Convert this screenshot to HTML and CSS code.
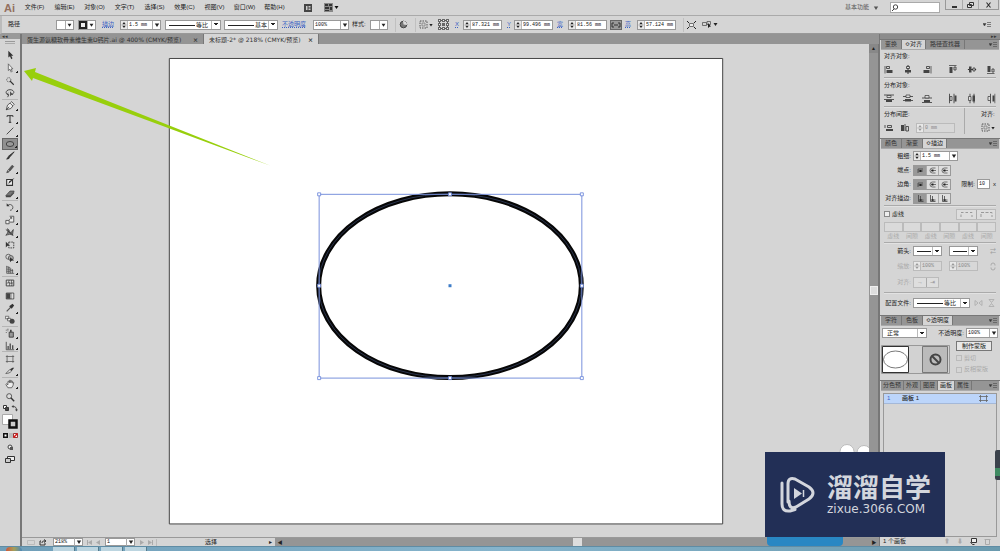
FILE: index.html
```html
<!DOCTYPE html>
<html lang="zh-CN">
<head>
<meta charset="utf-8">
<title>未标题-2</title>
<link rel="stylesheet" href="styles.css">
</head>
<body>
<svg class="defs" aria-hidden="true">
  <symbol id="spin" viewBox="0 0 7 9"><path d="M1.500 3.500 3.500 1 5.500 3.500zM1.500 5.500 3.500 8 5.500 5.500z" fill="currentColor"/><path d="M0 4.500h7" stroke="#999" stroke-width=".5"/></symbol>
  <symbol id="down" viewBox="0 0 8 8"><path d="M1.800 2.500h4.400L4 6z" fill="currentColor"/></symbol>
  <symbol id="grid" viewBox="0 0 9 9"><path d="M1 1h7v7H1z" fill="none" stroke="#555" stroke-dasharray="1.500 1"/><path d="M3 3h3v3H3z" fill="none" stroke="#777" stroke-width=".7"/></symbol>
  <symbol id="flyout" viewBox="0 0 9 6"><path d="M0 1.500h3L1.500 4zM4 .5h4M4 2.500h4M4 4.500h4" fill="#333" stroke="#555" stroke-width=".7"/></symbol>
  <symbol id="al1" viewBox="0 0 9 9"><path d="M.5 1v7.500" stroke="#333" stroke-width=".7"/><path d="M2 1.500h3v2H2z" fill="none" stroke="#333" stroke-width=".8"/><path d="M2 5h6v3H2z" fill="#444"/></symbol>
  <symbol id="al2" viewBox="0 0 9 9"><path d="M4.500 0v9" stroke="#333"/><path d="M3 1.500h3v2H3z" fill="#ddd" stroke="#333" stroke-width=".8"/><path d="M1.500 5h6v2.500h-6z" fill="#444"/></symbol>
  <symbol id="al3" viewBox="0 0 9 9"><path d="M8.500 1v7.500" stroke="#333" stroke-width=".7"/><path d="M4 1.500h3v2H4z" fill="none" stroke="#333" stroke-width=".8"/><path d="M1 5h6v3H1z" fill="#444"/></symbol>
  <symbol id="ds1" viewBox="0 0 10 9"><path d="M0 1h10M0 5.500h10" stroke="#333" stroke-width=".8"/><path d="M3 1.500h4v2H3z" fill="#ddd" stroke="#333" stroke-width=".7"/><path d="M2 6h6v2H2z" fill="#444"/></symbol>
  <symbol id="ds2" viewBox="0 0 10 9"><path d="M0 2.500h10M0 6.500h10" stroke="#333" stroke-width=".8"/><path d="M3 1h4v2.500H3z" fill="#ddd" stroke="#333" stroke-width=".7"/><path d="M2 5h6v2.500H2z" fill="#444"/></symbol>
  <symbol id="ds3" viewBox="0 0 10 9"><path d="M0 4h10M0 8.500h10" stroke="#333" stroke-width=".8"/><path d="M3 1.500h4V4H3z" fill="#ddd" stroke="#333" stroke-width=".7"/><path d="M2 6h6v2H2z" fill="#444"/></symbol>
  <symbol id="cap" viewBox="0 0 11 9"><path d="M3 7V3h5M3 5h5" fill="none" stroke="#444" stroke-width=".8"/><path d="M4.500 4h2v2h-2z" fill="#222"/></symbol>
  <symbol id="capr" viewBox="0 0 11 9"><path d="M8.500 2H5.500a2.500 2.500 0 0 0 0 5h3M4 4.500h5" fill="none" stroke="#444" stroke-width=".7"/><path d="M4.500 3.500h2v2h-2z" fill="#222"/></symbol>
  <symbol id="edge" viewBox="0 0 11 9"><path d="M3.500 1v6.500h5M5.500 2v4h3" fill="none" stroke="#444" stroke-width=".8"/><path d="M4.500 5h2v2h-2z" fill="#333"/></symbol>
</svg>
<div class="app">
  <header class="menubar">
    <span class="logo">Ai</span>
    <nav class="menus">
      <button>文件(F)</button><button>编辑(E)</button><button>对象(O)</button><button>文字(T)</button><button>选择(S)</button><button>效果(C)</button><button>视图(V)</button><button>窗口(W)</button><button>帮助(H)</button>
    </nav>
    <button class="bridge" aria-label="Bridge"><svg width="8" height="8"><path d="M0 0h8v8H0z" fill="#444"/><path d="M2 2h1.500v4H2zM4.500 2h2v1.500h-2zM4.500 4.500h2V6h-2z" fill="#ccc"/></svg></button>
    <button class="arrange" aria-label="排列文档"><svg width="15" height="9"><path d="M0 0h9v9H0z" fill="#888"/><path d="M1 1h3v2H1zM5 1h3v2H5zM1 4h4v2H1zM1 7h4v1H1zM6 4h2v3H6z" fill="#333"/><path d="M10.500 3h4L12.500 6z" fill="#111"/></svg></button>
    <span class="grow"></span>
    <button class="workspace">基本功能<svg width="8" height="8"><use href="#down"/></svg></button>
    <label class="search"><svg width="8" height="8"><circle cx="4.500" cy="3" r="2.200" fill="none" stroke="#444"/><path d="M3 5 1 7" stroke="#444"/></svg><input aria-label="搜索"></label>
    <div class="winbtns">
      <button aria-label="最小化"><svg width="9" height="8"><path d="M2 5h5v2H2z" fill="#333"/></svg></button><button aria-label="还原"><svg width="9" height="8"><path d="M3.500 1.500h4v3h-4zM1.500 3.500h4v3h-4z" fill="#ddd" stroke="#333"/></svg></button><button aria-label="关闭"><svg width="9" height="8"><path d="m2.500 1.500 4 5m0-5-4 5" stroke="#333" stroke-width="1.200"/></svg></button>
    </div>
  </header>

  <section class="control">
    <span>路径</span>
    <button class="swatch w18" aria-label="填色"><i class="fill"></i><svg width="8" height="8"><use href="#down"/></svg></button>
    <button class="swatch w18" aria-label="描边色"><i class="ring"></i><svg width="8" height="8"><use href="#down"/></svg></button>
    <a href="#stroke">描边</a>
    <div class="combo w41"><svg class="spin"><use href="#spin"/></svg><input aria-label="描边粗细" value="1.5 mm"><button aria-label="粗细列表"><svg width="8" height="8"><use href="#down"/></svg></button></div>
    <select class="sel line w56" aria-label="变量宽度"><option>等比</option></select>
    <select class="sel line w54" aria-label="画笔"><option>基本</option></select>
    <a href="#opacity">不透明度</a>
    <div class="combo w36"><input aria-label="不透明度" value="100%"><button aria-label="不透明度列表"><svg width="8" height="8"><use href="#down"/></svg></button></div>
    <span>样式:</span>
    <button class="swatch w18" aria-label="图形样式"><i class="fill"></i><svg width="8" height="8"><use href="#down"/></svg></button>
    <button class="ic sep" aria-label="重新着色"><svg width="9" height="9"><circle cx="4.500" cy="4.500" r="3.300" fill="#777" stroke="#444"/><path d="M4 1a3.500 3.500 0 0 1 4 4L4.500 4.500z" fill="#ddd"/></svg></button>
    <button class="ic sep" aria-label="对齐选项"><svg width="9" height="9"><use href="#grid"/></svg><svg width="6" height="6"><use href="#down"/></svg></button>
    <button class="ic sep" aria-label="参考点"><svg width="11" height="11"><path d="M1.500 1.500h8v8h-8z" fill="none" stroke="#555"/><path d="M0 0h3v3H0zM4 0h3v3H4zM8 0h3v3H8zM0 4h3v3H0zM4 4h3v3H4zM8 4h3v3H8zM0 8h3v3H0zM4 8h3v3H4zM8 8h3v3H8z" fill="#666"/><path d="M1 1h1v1H1zM5 1h1v1H5zM9 1h1v1H9zM1 5h1v1H1zM9 5h1v1H9zM1 9h1v1H1zM5 9h1v1H5zM9 9h1v1H9z" fill="#eee"/></svg></button>
    <a href="#x">X</a>
    <div class="combo w39"><svg class="spin"><use href="#spin"/></svg><input id="x" aria-label="X" value="87.321 mm"></div>
    <a href="#y">Y</a>
    <div class="combo w39"><svg class="spin"><use href="#spin"/></svg><input id="y" aria-label="Y" value="99.496 mm"></div>
    <a href="#w">宽</a>
    <div class="combo w39"><svg class="spin"><use href="#spin"/></svg><input id="w" aria-label="宽" value="81.56 mm"></div>
    <button class="link" aria-label="约束比例"><svg width="10" height="6"><path d="M3 1H1v4h2M7 1h2v4H7M3 3h4" fill="none" stroke="#333"/></svg></button>
    <a href="#h">高</a>
    <div class="combo w39"><svg class="spin"><use href="#spin"/></svg><input id="h" aria-label="高" value="57.124 mm"></div>
    <button class="ic sep" aria-label="隔离"><svg width="9" height="8"><path d="M2.500 2.500h4v3h-4z" fill="#eee" stroke="#555" stroke-width=".8"/><path d="M0 0l2 2M9 0 7 2M0 8l2-2M9 8 7 6" stroke="#222"/></svg></button>
    <button class="ic" aria-label="选择类似"><svg width="16" height="9"><path d="M.5 2.500h4v3h-4zM5 1.500h3.500v3H5z" fill="none" stroke="#555" stroke-width=".8"/><path d="m6 3 3 3.500-1.500.2L6 8z" fill="#222"/><path d="M11.500 3h4L13.500 6z" fill="#222"/></svg></button>
    <button class="ic end" aria-label="面板菜单"><svg width="9" height="6"><use href="#flyout"/></svg></button>
  </section>

  <main class="work">
    <aside class="tools">
      <div class="grip">◂◂</div>
      <div class="handle"></div>
      <div class="toolgrid">
        <button aria-label="选择"><svg viewBox="0 0 12 12"><path d="M4 1v8l2-1.500L7.500 11 9 10 7.500 7H10z" fill="#333"/></svg></button>
        <button class="more" aria-label="直接选择"><svg viewBox="0 0 12 12"><path d="M4 1v8l2-1.500L7.500 11 8.500 10 7.500 7H9.500z" fill="#eee" stroke="#444" stroke-width=".8"/></svg></button>
        <button aria-label="魔棒"><svg viewBox="0 0 12 12"><circle cx="4.500" cy="4.500" r="2.500" fill="none" stroke="#555" stroke-dasharray="1.500 .7"/><path d="m6 6 4.500 4.500" stroke="#333" stroke-width="1.300"/></svg></button>
        <button class="rule" aria-label="套索"><svg viewBox="0 0 12 12"><path d="M4 8C-.5 7 1 2 6 2s6.500 5 1.500 5.500M4 6c-2 1-1 3 0 2s0 2-1 3" fill="none" stroke="#333"/><path d="m6 4 0 6 1.500-1.500H10z" fill="#555"/></svg></button>
        <button class="more" aria-label="钢笔"><svg viewBox="0 0 12 12"><path d="M1.500 10.500 3 5l3-2.500L9.500 6 7 9zM1.500 10.500 5 7M6.500 2 8 .8 11 4 9.700 5.500" fill="#eee" stroke="#333" stroke-width=".9"/></svg></button>
        <button class="more" aria-label="文字"><svg viewBox="0 0 12 12"><path d="M2.500 3.500V2h7v1.500M6 2v8M4.500 10h3" fill="none" stroke="#333" stroke-width="1.200"/></svg></button>
        <button class="more" aria-label="直线段"><svg viewBox="0 0 12 12"><path d="m2 10 8-8" stroke="#333"/></svg></button>
        <button class="more on" aria-label="椭圆"><svg viewBox="0 0 12 12"><ellipse cx="6" cy="6" rx="4.500" ry="3" fill="#999" stroke="#333"/></svg></button>
        <button aria-label="画笔"><svg viewBox="0 0 12 12"><path d="m11 1-5 6-1.500-1z" fill="#333" stroke="#333"/><path d="M4.500 6 6 7.500C5 10 3 10.500 1 10c2-1 1.500-3 3.500-4" fill="#333"/></svg></button>
        <button class="more" aria-label="铅笔"><svg viewBox="0 0 12 12"><path d="M2 10.500 3 8l5.500-6.500L10.500 3 5 9.500z" fill="#555" stroke="#333" stroke-width=".6"/><path d="m3.500 7.500 2 1.500" stroke="#ddd"/></svg></button>
        <button aria-label="斑点画笔"><svg viewBox="0 0 12 12"><path d="M2 3h7v7H2z" fill="#eee" stroke="#333" stroke-width="1.300"/><path d="m11.500 1-4.500 5-3 2.500 1-3.500z" fill="#333"/></svg></button>
        <button class="more rule" aria-label="橡皮擦"><svg viewBox="0 0 12 12"><path d="m1 8 5-5.500h5L6.500 8z" fill="#777" stroke="#444"/><path d="M1 8h5.500l4.500-5V5L6.500 10H1z" fill="#444"/></svg></button>
        <button class="more" aria-label="旋转"><svg viewBox="0 0 12 12"><path d="M3.500 4A3.500 3.500 0 1 1 6 10" fill="none" stroke="#444"/><path d="M2 1.500V5h3.500z" fill="#333"/></svg></button>
        <button class="more" aria-label="比例缩放"><svg viewBox="0 0 12 12"><path d="M1 6.500h4v4H1zM5.500 1.500h5v7H6" fill="#eee" stroke="#444"/><path d="m5 6 3-3M6 3h2v2" fill="none" stroke="#333" stroke-width=".8"/></svg></button>
        <button class="more" aria-label="宽度"><svg viewBox="0 0 12 12"><path d="M1 10c3-4 3-4 2-8 3 2 2 4 4 5l3-4-1 7C7 8 4 9 1 10" fill="#777" stroke="#333" stroke-width=".8"/><path d="M1 3l9 7" stroke="#333"/></svg></button>
        <button aria-label="自由变换"><svg viewBox="0 0 12 12"><path d="M4.500 2.500h6v7h-6z" fill="none" stroke="#333" stroke-dasharray="2 1"/><path d="M1 2v7l2-2h3z" fill="#333"/></svg></button>
        <button class="more" aria-label="形状生成器"><svg viewBox="0 0 12 12"><circle cx="4" cy="4.500" r="3" fill="none" stroke="#555"/><circle cx="7" cy="6" r="3" fill="#aaa" stroke="#555"/><path d="m6 5 0 6 2-2h3z" fill="#333"/></svg></button>
        <button class="more rule" aria-label="透视网格"><svg viewBox="0 0 12 12"><path d="M2 1v9h9M2 2l4 1v7M4 2v8M2 5h4M2 7.500h4M7 4v6M9 5v5M6 6l4 1" fill="none" stroke="#444" stroke-width=".8"/></svg></button>
        <button aria-label="网格"><svg viewBox="0 0 12 12"><path d="M1.500 2.500h9v7h-9z" fill="#ddd" stroke="#333"/><path d="M2 7c3-4 5 2 8-2M5 2.500c-2 3 2 4 0 7M8 2.500c-1 3 1 4 0 7" fill="none" stroke="#444"/></svg></button>
        <button aria-label="渐变"><svg viewBox="0 0 12 12"><path d="M1.500 2.500h9v7h-9z" fill="#999" stroke="#333"/><path d="M2 3h4v6H2z" fill="#444"/><path d="M8 3h2v6H8z" fill="#ddd"/></svg></button>
        <button class="more" aria-label="吸管"><svg viewBox="0 0 12 12"><path d="m2 10 5-5" stroke="#555" stroke-width="1.500"/><path d="m5 4 3 3 3-4-2-2z" fill="#333"/></svg></button>
        <button class="rule" aria-label="混合"><svg viewBox="0 0 12 12"><path d="M.5 1.500h4v3h-4zM3 4h4v3H3z" fill="#eee" stroke="#444" stroke-width=".8"/><circle cx="8.500" cy="7.500" r="3" fill="#444"/></svg></button>
        <button class="more" aria-label="符号喷枪"><svg viewBox="0 0 12 12"><path d="M5 5h5v6H5z" fill="#999" stroke="#333"/><path d="M6 2h2v3H6z" fill="#444"/><path d="M1 2h1v1H1zM3 3h1v1H3zM1 5h1v1H1zM3 1h1v1H3z" fill="#333"/></svg></button>
        <button class="more rule" aria-label="柱形图"><svg viewBox="0 0 12 12"><path d="M1.500 1v9.500H11" fill="none" stroke="#444"/><path d="M3 6h1.500v4H3zM5.500 3H7v7H5.500zM8.500 5H10v5H8.500z" fill="#444"/></svg></button>
        <button aria-label="画板"><svg viewBox="0 0 12 12"><path d="M1 3h10M1 9h10M2.500 1.500v9M9.500 1.500v9" stroke="#555" stroke-width=".9"/></svg></button>
        <button class="more rule" aria-label="切片"><svg viewBox="0 0 12 12"><path d="m1 9 5-5 2 2c-2 2-4 3-7 3" fill="#ddd" stroke="#555"/><path d="m6 4 3-2h2L8 6z" fill="#333"/></svg></button>
        <button class="more" aria-label="抓手"><svg viewBox="0 0 12 12"><path d="M3.500 10.500 1 6.500l1-.8 1.500 1.300V3l1-.5.7 2L5.500 1.500h1l.5 3 .8-2.500 1 .5L8.500 5l1.200-1 .8.500-1 3.500-1.500 2.500z" fill="#eee" stroke="#333" stroke-width=".8"/></svg></button>
        <button aria-label="缩放"><svg viewBox="0 0 12 12"><circle cx="5" cy="5" r="3" fill="#ddd" stroke="#444"/><path d="m7 7 4 4" stroke="#333" stroke-width="1.700"/></svg></button>
      </div>
      <svg class="colors" viewBox="0 0 20 62"><path d="M3.500 2.500h3v3h-3z" fill="#fff" stroke="#333"/><path d="M5.500 4.500h3v3h-3z" fill="#444" stroke="#333"/><path d="M13 3.500c3 0 3.500 1.500 3.500 4" fill="none" stroke="#444"/><path d="m11.500 3.500 2-1.500v3zM15 6.500h3L16.500 8.500z" fill="#444"/><path d="M2.500 11.500h10v10h-10z" fill="#fff" stroke="#aaa"/><path d="M9.500 17.500h7v7h-7z" fill="#ccc" stroke="#111" stroke-width="2.500"/><path d="M3 30h5v5H3z" fill="#111"/><path d="M4.500 31.500h2v2h-2z" fill="#fff"/><path d="M9 30h4v5H9z" fill="#bbb"/><path d="M13.500 30.500h4v4h-4z" fill="#fff" stroke="#933"/><path d="m13.500 34.500 4-4" stroke="#d11" stroke-width="1.500"/><circle cx="10" cy="44" r="2" fill="#eee" stroke="#444"/><path d="M10 44h3v3h-3z" fill="#555"/><path d="M7.500 53.500h7v4h-7z" fill="#eee" stroke="#333"/><path d="M5.500 55.500h5v4h-5z" fill="#ccc" stroke="#333"/></svg>
    </aside>

    <section class="doc">
      <div class="doctabs">
        <button>蛋生源氨糖软骨素维生素D钙片.ai @ 400% (CMYK/预览)<b>×</b></button><button class="active">未标题-2* @ 218% (CMYK/预览)<b>×</b></button>
      </div>
      <div class="viewport">
        <svg class="stage" viewBox="0 0 848 494" preserveAspectRatio="xMinYMin slice">
          <path d="M147.500 14.500h554v466h-554z" fill="#fff" stroke="#444"/>
          <ellipse cx="428.500" cy="242" rx="131.500" ry="92" fill="none" stroke="#060606" stroke-width="5"/>
          <ellipse cx="428.500" cy="242" rx="131.500" ry="92" fill="none" stroke="#33405f" stroke-width=".8"/>
          <path d="M297.500 150.500h263v184h-263z" fill="none" stroke="#7891dc" stroke-width="1"/>
          <g fill="#fff" stroke="#6482d8" stroke-width=".8"><path d="M296 149h3v3h-3zM427 149h3v3h-3zM559 149h3v3h-3zM296 240.500h3v3h-3zM559 240.500h3v3h-3zM296 333h3v3h-3zM427 333h3v3h-3zM559 333h3v3h-3z"/></g>
          <path d="M427 240.500h3v3h-3z" fill="#3e7dc8"/>
          <path d="M2 27 14 24 13 28 249 122 11 34 10 37z" fill="#98cf0c"/>
          <g fill="#fff" stroke="#bbb"><circle cx="826" cy="408" r="7"/><circle cx="843" cy="409" r="7"/></g>
        </svg>
        <div class="vscroll"><button aria-label="向上">▲</button><i></i></div>
      </div>
      <footer class="status">
        <svg class="sync" width="26" height="7"><path d="M5.500 1.500h7v4h-7z" fill="none" stroke="#bbb"/><path d="M19 2h-1v4h5V4M20 4c0-2 1-2 3-2M22 .5 24 2l-2 1.500" fill="none" stroke="#333"/></svg>
        <div class="combo w30"><input aria-label="缩放比例" value="218%"><button aria-label="缩放列表"><svg width="8" height="8"><use href="#down"/></svg></button></div>
        <span class="nav"><svg width="16" height="7"><path d="M1 1h1v5H1zM6 1v5L2 3.500zM14 1v5l-4-2.500z" fill="#aaa"/></svg></span>
        <div class="combo w30"><input aria-label="画板编号" value="1"><button aria-label="画板列表"><svg width="8" height="8"><use href="#down"/></svg></button></div>
        <span class="nav last"><svg width="16" height="7"><path d="M2 1v5l4-2.500zM10 1v5l4-2.500zM14 1h1v5h-1z" fill="#aaa"/></svg></span>
        <span class="current">选择</span>
        <button class="play" aria-label="状态菜单">▸</button>
        <div class="hscroll"><button aria-label="向左">◀</button><i></i><button aria-label="向右">▶</button></div>
      </footer>
    </section>

    <aside class="panels">
      <div class="collapse">▸▸</div>
      <section class="panel">
        <div class="tabs"><button>变换</button><button class="active">≎对齐</button><button>路径查找器</button><svg width="9" height="6"><use href="#flyout"/></svg></div>
        <div class="body align">
          <h3>对齐对象:</h3>
          <div class="six"><svg><use href="#al1"/></svg><svg><use href="#al2"/></svg><svg><use href="#al3"/></svg><svg class="turn"><use href="#al1"/></svg><svg class="turn"><use href="#al2"/></svg><svg class="turn"><use href="#al3"/></svg></div>
          <hr>
          <h3>分布对象:</h3>
          <div class="six"><svg><use href="#ds1"/></svg><svg><use href="#ds2"/></svg><svg><use href="#ds3"/></svg><svg class="left"><use href="#ds1"/></svg><svg class="left"><use href="#ds2"/></svg><svg class="left"><use href="#ds3"/></svg></div>
          <hr>
          <div class="spacing">
            <div><h3>分布间距:</h3><div class="line-row"><svg width="10" height="9"><path d="M1 2v3M3.500 2.500h4v2h-4z" fill="none" stroke="#333" stroke-width=".8"/><path d="M2 6h7v2H2z" fill="#444"/></svg><svg width="10" height="9"><path d="M1 2h3v6H1z" fill="#444"/><path d="M6 3.500h2.500V8H6zM5 1v7" fill="none" stroke="#333" stroke-width=".8"/></svg><div class="combo off w39"><svg class="spin"><use href="#spin"/></svg><input aria-label="间距" value="0 mm" disabled></div></div></div>
            <div class="to"><h3>对齐:</h3><div class="line-row"><svg width="9" height="9"><use href="#grid"/></svg><svg width="6" height="6"><use href="#down"/></svg></div></div>
          </div>
        </div>
      </section>

      <section class="panel" id="stroke">
        <div class="tabs"><button>颜色</button><button>渐变</button><button class="active">≎描边</button><svg width="9" height="6"><use href="#flyout"/></svg></div>
        <div class="body">
          <div class="row"><label for="wt">粗细:</label><div class="combo w45"><svg class="spin"><use href="#spin"/></svg><input id="wt" value="1.5 mm"><button aria-label="粗细列表"><svg width="8" height="8"><use href="#down"/></svg></button></div></div>
          <div class="row"><span class="lab">端点:</span><div class="seg"><button class="on" aria-label="平头"><svg><use href="#cap"/></svg></button><button aria-label="圆头"><svg><use href="#capr"/></svg></button><button aria-label="方头"><svg><use href="#capr"/></svg></button></div></div>
          <div class="row"><span class="lab">边角:</span><div class="seg"><button class="on" aria-label="斜接"><svg><use href="#cap"/></svg></button><button aria-label="圆角"><svg><use href="#capr"/></svg></button><button aria-label="斜角"><svg><use href="#capr"/></svg></button></div><label class="limit" for="lim">限制:</label><div class="combo w20"><input id="lim" value="10"></div><span class="times">x</span></div>
          <div class="row"><span class="lab">对齐描边:</span><div class="seg"><button class="on" aria-label="居中"><svg><use href="#edge"/></svg></button><button aria-label="内侧"><svg><use href="#edge"/></svg></button><button aria-label="外侧"><svg><use href="#edge"/></svg></button></div></div>
          <hr class="tight">
          <div class="row"><label class="check"><input type="checkbox">虚线</label><span class="grow"></span><div class="seg dim wide"><button disabled aria-label="保留"><svg viewBox="0 0 18 9"><path d="M3.500 7V2.500h11V7" fill="none" stroke="#999" stroke-dasharray="2.500 2"/></svg></button><button disabled aria-label="对齐虚线"><svg viewBox="0 0 18 9"><path d="M3.500 7V2.500h11V7" fill="none" stroke="#999" stroke-dasharray="3 1.500"/></svg></button></div></div>
          <div class="dashes"><label><input disabled>虚线</label><label><input disabled>间隙</label><label><input disabled>虚线</label><label><input disabled>间隙</label><label><input disabled>虚线</label><label><input disabled>间隙</label></div>
          <hr>
          <div class="row arrows"><span class="lab">箭头:</span><select class="sel short" aria-label="起点箭头"><option></option></select><select class="sel short" aria-label="终点箭头"><option></option></select><span class="tail">⇄</span></div>
          <div class="row arrows dimrow"><span class="lab">缩放:</span><div class="combo off w29"><svg class="spin"><use href="#spin"/></svg><input aria-label="起点缩放" value="100%" disabled></div><div class="combo off w29"><svg class="spin"><use href="#spin"/></svg><input aria-label="终点缩放" value="100%" disabled></div><span class="tail"><svg width="6" height="9"><path d="M1 3.500V3a2 2 0 0 1 4 0v.5M1 5.500V6a2 2 0 0 0 4 0v-.5" fill="none" stroke="#aaa"/></svg></span></div>
          <div class="row dimrow"><span class="lab">对齐:</span><div class="seg dim"><button disabled>→</button><button disabled>⇥</button></div></div>
          <hr>
          <div class="row profile"><label for="prof">配置文件:</label><select id="prof" class="sel line w57"><option>等比</option></select><span class="tail"><svg width="22" height="8"><path d="M1 1.500v5L4 4zM8 1.500v5L5 4zM15 .5h5L17.500 3.500zM15 7.500h5L17.500 4.500z" fill="none" stroke="#aaa" stroke-width=".8"/></svg></span></div>
        </div>
      </section>

      <section class="panel" id="opacity">
        <div class="tabs"><button>字符</button><button>色板</button><button class="active">≎透明度</button><svg width="9" height="6"><use href="#flyout"/></svg></div>
        <div class="body">
          <div class="row mode"><select class="sel blend" aria-label="混合模式"><option>正常</option></select><span class="grow"></span><label for="op">不透明度:</label><div class="combo w32"><input id="op" value="100%"><button aria-label="不透明度列表"><svg width="8" height="8"><use href="#down"/></svg></button></div></div>
          <div class="maskrow">
            <svg class="thumbs" width="70" height="29"><path d="M.5.5h68v28H.5z" fill="#d2d2d2" stroke="#999"/><path d="M1.500 1.500h26v26h-26z" fill="#fff" stroke="#333"/><ellipse cx="14.500" cy="14.500" rx="12" ry="8.500" fill="none" stroke="#555" stroke-width=".8"/><path d="M41.500 1.500h25v26h-25z" fill="#bbb" stroke="#777"/><circle cx="54.500" cy="14.500" r="5" fill="none" stroke="#444" stroke-width="2"/><path d="m51 11 7 7" stroke="#444" stroke-width="2"/></svg>
            <div class="maskopts"><button>制作蒙版</button><label class="check"><input type="checkbox" disabled>剪切</label><label class="check"><input type="checkbox" disabled>反相蒙版</label></div>
          </div>
        </div>
      </section>

      <section class="panel last">
        <div class="tabs"><button>分色预</button><button>外观</button><button>图层</button><button class="active">画板</button><button>属性</button><svg width="9" height="6"><use href="#flyout"/></svg></div>
        <div class="list"><div class="item"><span>1</span><b>画板 1</b><svg width="9" height="7"><path d="M0 1.500h9M0 5.500h9M1.500 0v7M7.500 0v7" stroke="#666" stroke-width=".8"/></svg></div></div>
        <div class="foot"><span>1 个画板</span><i>⬆</i><i>⬇</i><svg width="7" height="7"><path d="M1.500.5h5v4h-5zM.5 4l2 2.500h2" fill="#eee" stroke="#333"/></svg><svg width="7" height="7"><path d="M1.500 2v4.500h4V2M.5 1.500h6" fill="none" stroke="#aaa"/></svg></div>
      </section>
    </aside>
  </main>
  <div class="taskbar"><i class="start"></i><i class="task"></i><i class="task"></i><i class="task"></i><i class="task"></i></div>

  <div class="blob"></div>
  <div class="sidebadge"></div>
  <div class="watermark">
    <svg width="36" height="38"><g fill="none" stroke="#d3d6dd" stroke-width="3" stroke-linecap="round" stroke-linejoin="round"><path d="M2 7v21q0 8 8 7l5-1.500"/><path d="M8 26V8Q8 1 15 3L29 11Q37 17 29 23L16 31Q9 34 9 25"/></g><path d="m14 12 8 5.500-8 5.500z" fill="#d3d6dd"/><path d="M23.500 14v7" stroke="#d3d6dd" stroke-width="1.500"/></svg>
    <div class="brand"><strong>溜溜自学</strong><span>zixue.3066.COM</span></div>
  </div>
</div>
</body>
</html>
```
FILE: styles.css
```css
* { box-sizing: border-box; }
html, body { height: 100%; }
body {
  margin: 0;
  overflow: hidden;
  background: #d5d5d5;
  color: #222;
  font: 6px/9px "Liberation Sans", "Noto Sans CJK SC", sans-serif;
}
button, input, select { margin: 0; padding: 0; border: 0; border-radius: 0; background: none; color: inherit; font: inherit; }
button { display: flex; align-items: center; justify-content: center; white-space: nowrap; }
svg { display: block; flex: none; }
a { color: #3c63c4; text-decoration: underline dotted 1px; white-space: nowrap; }
h3 { margin: 0; font: inherit; }
hr { width: 100%; height: 2px; margin: 2px 0 0; border: 0; border-top: 1px solid #aaa; border-bottom: 1px solid #e2e2e2; }
hr.tight { margin: 0; }
.defs { position: absolute; width: 0; height: 0; }
.grow { flex: 1; }

.app { position: relative; display: flex; flex-direction: column; height: 100vh; }

/* Menu bar */
.menubar { display: flex; align-items: center; height: 16px; padding-left: 4px; border-bottom: 1px solid #aaa; background: #d5d5d5; }
.logo { width: 20px; color: #93705f; font: bold 11px/14px "Liberation Sans", sans-serif; }
.menus { display: flex; gap: 9px; width: 280px; }
.menus button { width: 21px; }
.bridge { width: 8px; }
.arrange { margin-left: 12px; }
.workspace { gap: 3px; margin-right: 10px; color: #555; }
.search { display: flex; align-items: center; width: 50px; height: 11px; border: 1px solid #aaa; background: #fff; }
.search input { width: 100%; min-width: 0; }
.winbtns { display: flex; align-self: flex-start; margin: 0 1px 0 5px; border: 1px solid #999; border-top: 0; }
.winbtns button { width: 16px; height: 9px; }
.winbtns button + button { border-left: 1px solid #aaa; }
.winbtns button:last-child { width: 20px; }

/* Control bar */
.control {
  display: grid;
  grid-template-columns: 48px 22px 24px 18px 45px 59px 58px 31px 39px 18px 25px 20px 23px 17px 8px 44px 7px 43px 11px 42px 15px 12px 46px 19px 20px 1fr;
  align-items: center;
  height: 18px;
  padding-left: 6px;
  border-left: 2px solid #bbb;
  border-bottom: 1px solid #999;
}
.control > * { min-width: 0; white-space: nowrap; }
.swatch { height: 10px; border: 1px solid #999; background: #fff; justify-content: flex-end; }
.swatch svg { border-left: 1px solid #aaa; }
.swatch i { flex: 1; height: 8px; }
.ring { border: 2px solid #222; background: #eee; }
.combo { display: flex; align-items: center; height: 10px; border: 1px solid #999; background: #fff; }
.combo input { flex: 1; width: 0; min-width: 0; height: 8px; padding-left: 1px; font: 5px/8px "Liberation Mono", monospace; color: #111; }
.combo button { width: 8px; height: 8px; border-left: 1px solid #aaa; }
.spin { width: 7px; height: 8px; border-right: 1px solid #bbb; background: #e8e8e8; }
.off { border-color: #bbb; background: #d8d8d8; color: #999; }
.off input { color: #888; }
.w18 { width: 18px; } .w20 { width: 20px; } .w29 { width: 29px; } .w30 { width: 30px; }
.w32 { width: 32px; } .w36 { width: 36px; } .w39 { width: 39px; } .w41 { width: 41px; }
.w45 { width: 45px; } .w54 { width: 54px; } .w56 { width: 56px; } .w57 { width: 57px; }
.sel {
  height: 10px;
  appearance: none;
  border: 1px solid #999;
  background-color: #fff;
  background-image: linear-gradient(#bbb, #bbb), conic-gradient(from -35deg at 50% 100%, #222 70deg, transparent 0);
  background-size: 1px 100%, 4px 3px;
  background-position: right 8px top 0, right 2px center;
  background-repeat: no-repeat;
  line-height: 8px;
}
.line {
  padding-left: 30px;
  background-image: linear-gradient(#bbb, #bbb), conic-gradient(from -35deg at 50% 100%, #222 70deg, transparent 0), linear-gradient(#222, #222);
  background-size: 1px 100%, 4px 3px, 26px 1px;
  background-position: right 8px top 0, right 2px center, 3px center;
}
.short {
  width: 29px;
  background-image: linear-gradient(#bbb, #bbb), conic-gradient(from -35deg at 50% 100%, #222 70deg, transparent 0), linear-gradient(#222, #222);
  background-size: 1px 100%, 4px 3px, 14px 1px;
  background-position: right 8px top 0, right 2px center, 3px center;
}
.sel { background-position: right 8px top 0, right 2px center, 3px 4px; }
.sel { background-image: linear-gradient(#bbb, #bbb), linear-gradient(to bottom right, #222 50%, transparent 0); }
.sel, .line, .short { background-image: linear-gradient(#bbb, #bbb), conic-gradient(from -35deg at 50% 100%, #222 70deg, transparent 0), linear-gradient(#222, #222); }
.blend { background-size: 1px 100%, 4px 3px, 0 0; }
.ic { height: 14px; justify-content: flex-start; }
.ic.sep { border-left: 1px solid #c0c0c0; padding-left: 3px; }
.ic.sep:nth-child(14) { border-left: 0; padding-left: 0; }
.ic.end { justify-content: flex-end; padding-right: 8px; }
.link { width: 12px; height: 10px; border: 1px solid #666; background: #999; }

/* Work area */
.work { display: flex; flex: 1; min-height: 0; }
.tools { flex: none; width: 22px; border-right: 2px solid #777; background: #d5d5d5; }
.grip { height: 5px; padding-left: 2px; background: #999; color: #333; font-size: 5px; line-height: 5px; }
.handle { height: 3px; margin: 2px 5px 5px; border-top: 1px solid #999; border-bottom: 1px solid #aaa; }
.toolgrid { display: grid; grid-auto-rows: 1fr; height: 354px; padding: 0 2px; }
.toolgrid button { position: relative; padding: 0 2px; }
.toolgrid button svg { width: 10px; height: 10px; }
.toolgrid .on { border: 1px solid #666; background: #909090; }
.rule { border-bottom: 1px solid #b5b5b5; }
.more::after { content: ""; position: absolute; right: 0; bottom: 1px; width: 2px; height: 2px; background: linear-gradient(135deg, transparent 40%, #222 0); }
.colors { width: 20px; height: 62px; }

.doc { display: flex; flex: 1; flex-direction: column; min-width: 0; }
.doctabs { display: flex; height: 10px; background: #949494; }
.doctabs button { justify-content: space-between; width: 182px; padding: 0 5px; border-right: 1px solid #777; color: #333; font-family: "DejaVu Sans", "Noto Sans CJK SC", sans-serif; }
.doctabs .active { width: 115px; background: #d5d5d5; }
.viewport { display: flex; flex: 1; min-height: 0; }
.stage { flex: 1; min-width: 0; height: 100%; }
.vscroll { display: flex; flex-direction: column; align-items: center; width: 10px; border-right: 1px solid #777; background: #959595; }
.vscroll button { width: 100%; height: 9px; background: #888; font-size: 5px; }
.vscroll i { width: 8px; height: 9px; margin-top: 233px; background: #ddd; border: 1px solid #eee; }
.status { display: flex; align-items: center; height: 9px; border-top: 1px solid #999; background: #d5d5d5; }
.status .combo { height: 8px; }
.sync { margin-right: 5px; }
.nav { display: flex; justify-content: center; width: 22px; }
.last { border-right: 1px solid #bbb; }
.current { width: 108px; text-align: center; }
.play { width: 10px; }
.hscroll { display: flex; flex: 1; align-items: center; justify-content: space-between; background: #959595; height: 8px; }
.hscroll button { width: 10px; height: 8px; font-size: 5px; }
.hscroll i { width: 9px; height: 8px; background: #ddd; }

/* Panels */
.panels { display: flex; flex: none; flex-direction: column; width: 121px; border-left: 1px solid #777; background: #d5d5d5; }
.collapse { height: 6px; padding-right: 3px; background: #8c8c8c; border-bottom: 1px solid #777; color: #333; font-size: 5px; line-height: 5px; text-align: right; }
.tabs { display: flex; align-items: center; height: 10px; background: #959595; border-bottom: 1px solid #aaa; }
.tabs button { height: 9px; padding: 0 4px; border-right: 1px solid #777; color: #333; }
.tabs .active { padding: 0 3px; background: #d5d5d5; color: #222; }
.tabs > svg { margin-left: auto; margin-right: 1px; }
.panel { border-bottom: 1px solid #777; padding: 0 1px; }
.body { padding: 0 3px 3px; }
.body h3 { height: 13px; line-height: 13px; }
.six { display: grid; grid-template-columns: 19px 19px 26px 19px 19px 10px; align-items: center; height: 13px; }
.six svg { width: 10px; height: 9px; }
.turn { transform: rotate(90deg); }
.left { transform: rotate(-90deg); }
.align { padding-bottom: 4px; }
.align hr { margin-top: 1px; }
.spacing { display: flex; justify-content: space-between; }
.line-row { display: flex; align-items: center; gap: 6px; height: 13px; }
.to { padding-left: 16px; border-left: 1px solid #aaa; }
.to .line-row { gap: 0; }
.row { display: flex; align-items: center; height: 14px; }
.row > label, .lab { flex: none; width: 27px; margin-right: 2px; text-align: right; white-space: nowrap; }
.row > .limit { width: 24px; }
.times { margin-left: 3px; }
.seg { display: flex; border: 1px solid #999; }
.seg button { width: 12px; height: 9px; background: #dedede; }
.seg button svg { width: 11px; height: 9px; }
.seg button + button { border-left: 1px solid #aaa; }
.seg .on { background: #999; }
.seg.dim { border-color: #bbb; color: #999; }
.seg.wide button, .seg.wide svg { width: 19px; }
.row > .check { width: auto; }
.check { display: flex; align-items: center; gap: 2px; white-space: nowrap; }
.check input { appearance: none; flex: none; width: 6px; height: 6px; border: 1px solid #888; background: #eee; }
.check input:disabled { border-color: #bbb; background: #d5d5d5; }
.dashes { display: grid; grid-template-columns: repeat(6, 1fr); padding-top: 1px; }
.dashes label { color: #aaa; text-align: center; line-height: 8px; }
.dashes input { display: block; width: 100%; height: 10px; border: 1px solid #bbb; background: #dadada; }
.arrows > .sel + .sel, .arrows > .combo + .combo { margin-left: 7px; }
.tail { margin-left: auto; color: #999; }
.dimrow { color: #aaa; height: 16px; }
.profile { height: 18px; }
.mode > label { width: auto; }
.blend { width: 45px; padding-left: 4px; }
.mode { margin: 0 -2px; }
.maskrow { display: flex; gap: 5px; height: 37px; padding-top: 5px; margin-left: -3px; }
.maskopts { display: flex; flex-direction: column; align-items: flex-start; justify-content: space-between; margin-top: -4px; height: 33px; color: #aaa; }
.maskopts button { width: 36px; height: 10px; border: 1px solid #777; background: #e8e8e8; color: #222; }
.panel.last { display: flex; flex: 1; flex-direction: column; min-height: 0; border: 0; }
.last .tabs button { padding: 0 2px; }
.list { flex: 1; margin: 2px 2px 0; border: 1px solid #999; }
.item { display: flex; align-items: center; height: 10px; padding: 0 8px 0 3px; background: #bcd5fa; border-bottom: 1px solid #a4b8d8; }
.item span { width: 15px; color: #3c63c4; }
.item b { flex: 1; font-weight: 500; }
.foot { display: flex; align-items: center; gap: 7px; height: 9px; padding: 0 8px 0 2px; }
.foot span { flex: 1; }
.foot i { color: #aaa; font-style: normal; }

/* System taskbar and overlays */
.taskbar { display: flex; gap: 2px; height: 5px; background: linear-gradient(90deg, #6f9eb8, #86b4cc 50%, #6a9aae); border-top: 1px solid #5f8ca4; }
.start { width: 16px; height: 4px; margin: 0 29px 0 6px; border-radius: 8px 8px 0 0; background: linear-gradient(90deg, #d0573a, #a4a05a, #4a87b8); }
.task { width: 22px; background: #bcd5e0; border-right: 1px solid #547a8c; }
.blob { position: absolute; right: 157px; bottom: 5px; width: 76px; height: 9px; border-radius: 0 0 4px 4px; background: #2987c3; }
.sidebadge { position: absolute; right: 0; bottom: 71px; width: 5px; height: 30px; border-radius: 2px 0 0 2px; background: linear-gradient(#3a414b 60%, #3f8a62 0 85%, #3a414b 0); }
.watermark {
  position: absolute;
  right: 55px;
  bottom: 14px;
  display: flex;
  align-items: center;
  gap: 11px;
  width: 180px;
  height: 85px;
  padding-left: 15px;
  background: #222f56;
  color: #d3d6dd;
}
.brand { display: grid; gap: 1px; padding-bottom: 4px; }
.watermark strong { font: bold 26px/32px "Noto Sans CJK SC", sans-serif; }
.watermark span { font: 12px/12px "DejaVu Sans", sans-serif; }
```
